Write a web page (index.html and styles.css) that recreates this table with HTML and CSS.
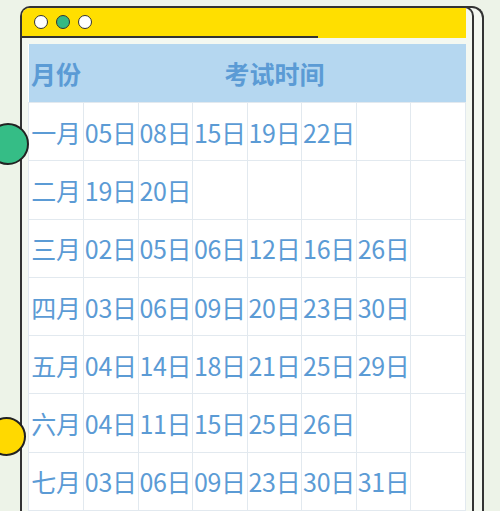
FILE: index.html
```html
<!DOCTYPE html>
<html>

<head>
    <title>考试时间</title>

    <link rel="stylesheet" href="styles.css">
</head>

<body>

    <div class="desk">
        <div class="paper">
            <div class="titlebar">
                <span class="dot"></span>
                <span class="dot dot-green"></span>
                <span class="dot"></span>
            </div>

            <table class="schedule">
                <thead>
                    <tr>
                        <th>月份</th>
                        <th colspan="7">考试时间</th>
                    </tr>
                </thead>
                <tbody>
                    <tr>
                        <td>一月</td><td>05日</td><td>08日</td><td>15日</td><td>19日</td><td>22日</td><td></td><td></td>
                    </tr>
                    <tr>
                        <td>二月</td><td>19日</td><td>20日</td><td></td><td></td><td></td><td></td><td></td>
                    </tr>
                    <tr>
                        <td>三月</td><td>02日</td><td>05日</td><td>06日</td><td>12日</td><td>16日</td><td>26日</td><td></td>
                    </tr>
                    <tr>
                        <td>四月</td><td>03日</td><td>06日</td><td>09日</td><td>20日</td><td>23日</td><td>30日</td><td></td>
                    </tr>
                    <tr>
                        <td>五月</td><td>04日</td><td>14日</td><td>18日</td><td>21日</td><td>25日</td><td>29日</td><td></td>
                    </tr>
                    <tr>
                        <td>六月</td><td>04日</td><td>11日</td><td>15日</td><td>25日</td><td>26日</td><td></td><td></td>
                    </tr>
                    <tr>
                        <td>七月</td><td>03日</td><td>06日</td><td>09日</td><td>23日</td><td>30日</td><td>31日</td><td></td>
                    </tr>
                    <tr class="spare">
                        <td></td><td></td><td></td><td></td><td></td><td></td><td></td><td></td>
                    </tr>
                </tbody>
            </table>
        </div>

        <!-- binder holes -->
        <span class="ring ring-green"></span>
        <span class="ring ring-yellow"></span>
    </div>

</body>

</html>
```

FILE: styles.css
```css
html,
body {
    margin: 0;
    height: 100%;
    overflow: hidden;
}

body {
    background: #edf3e8;
    font-family: "Noto Sans CJK SC", "Noto Sans", sans-serif;
}

.desk {
    position: relative;
    height: 511px;
    overflow: hidden;
}

/**
 * The sheet, with a second one peeking out behind it
 */
.paper {
    position: relative;
    width: 444px;
    height: 620px;
    margin: 6px 0 0 20px;
    padding-right: 6px;
    border: 2px solid #333;
    border-bottom: none;
    border-radius: 10px 10px 0 0;
    background: #f4f8f1;
}

.paper::before {
    content: "";
    position: absolute;
    top: -2px;
    left: 10px;
    right: -12px;
    bottom: 0;
    border: 2px solid #333;
    border-bottom: none;
    border-radius: 12px 12px 0 0;
    background: #f4f8f1;
    z-index: -1;
}

.titlebar {
    display: flex;
    align-items: center;
    gap: 8px;
    height: 28px;
    padding: 0 0 2px 12px;
    border-radius: 8px 0 0 0;
    background: linear-gradient(#333, #333) no-repeat left bottom / 296px 2px, #ffdf00;
}

.dot {
    width: 12px;
    height: 12px;
    border: 1.5px solid #333;
    border-radius: 50%;
    background: #fff;
}

.dot-green {
    background: #35b983;
}

/**
 * Exam table
 */
.schedule {
    width: 438px;
    margin: 6px 0 0 6px;
    table-layout: fixed;
    border-collapse: collapse;
    background: #fff;
    color: #5b9bd5;
}

.schedule th {
    height: 58px;
    padding: 0;
    background: #b5d7f0;
    font-size: 25px;
    font-weight: 700;
    text-align: center;
}

.schedule th:first-child {
    width: 55px;
}

.schedule td {
    height: 57.3px;
    padding: 0;
    border: 1px solid #e2e9ef;
    font-size: 25px;
    text-align: center;
    white-space: nowrap;
    letter-spacing: -0.3px;
}

.ring {
    position: absolute;
    border: 2px solid #222;
    border-radius: 50%;
}

.ring-green {
    left: -13px;
    top: 123px;
    width: 38px;
    height: 38px;
    background: #35bd86;
}

.ring-yellow {
    left: -13px;
    top: 417px;
    width: 35px;
    height: 35px;
    background: #ffd900;
}
```
